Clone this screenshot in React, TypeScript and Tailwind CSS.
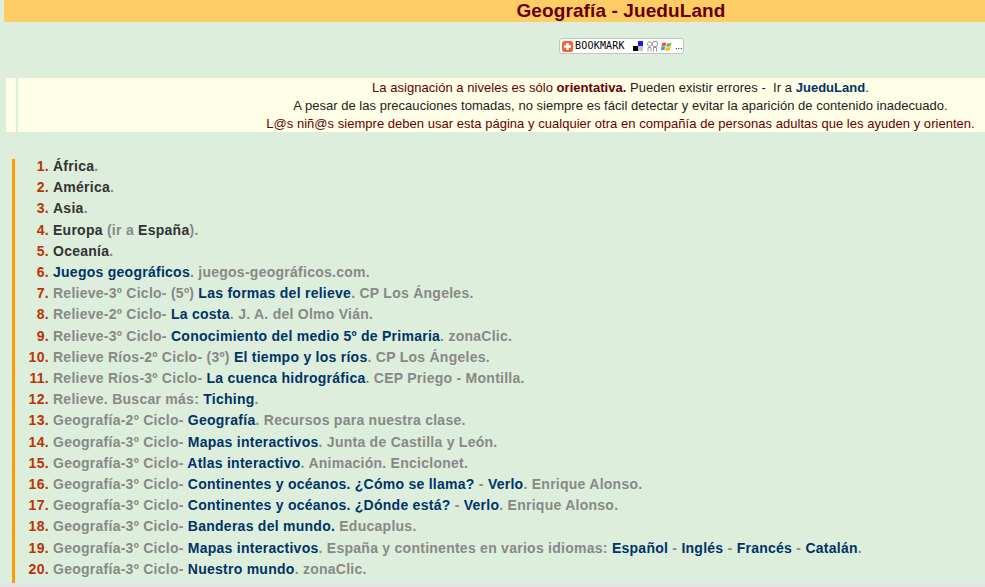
import React from 'react';

const GRAY = 'text-[#888888]';
const LINK = 'text-[#003366]';

const Dim = ({ children }: { children: React.ReactNode }) => <span className={GRAY}>{children}</span>;
const Link = ({ children }: { children: React.ReactNode }) => <span className={LINK}>{children}</span>;
const Dark = ({ children }: { children: React.ReactNode }) => <span className="text-[#333333]">{children}</span>;

const items: React.ReactNode[] = [
    <><Dark>África</Dark><Dim>.</Dim></>,
    <><Dark>América</Dark><Dim>.</Dim></>,
    <><Dark>Asia</Dark><Dim>.</Dim></>,
    <><Dark>Europa</Dark><Dim> (ir a </Dim><Dark>España</Dark><Dim>).</Dim></>,
    <><Dark>Oceanía</Dark><Dim>.</Dim></>,
    <><Link>Juegos geográficos</Link><Dim>. juegos-geográficos.com.</Dim></>,
    <><Dim>Relieve-3º Ciclo- (5º) </Dim><Link>Las formas del relieve</Link><Dim>. CP Los Ángeles.</Dim></>,
    <><Dim>Relieve-2º Ciclo- </Dim><Link>La costa</Link><Dim>. J. A. del Olmo Vián.</Dim></>,
    <><Dim>Relieve-3º Ciclo- </Dim><Link>Conocimiento del medio 5º de Primaria</Link><Dim>. zonaClic.</Dim></>,
    <><Dim>Relieve Ríos-2º Ciclo- (3º) </Dim><Link>El tiempo y los ríos</Link><Dim>. CP Los Ángeles.</Dim></>,
    <><Dim>Relieve Ríos-3º Ciclo- </Dim><Link>La cuenca hidrográfica</Link><Dim>. CEP Priego - Montilla.</Dim></>,
    <><Dim>Relieve. Buscar más: </Dim><Link>Tiching</Link><Dim>.</Dim></>,
    <><Dim>Geografía-2º Ciclo- </Dim><Link>Geografía</Link><Dim>. Recursos para nuestra clase.</Dim></>,
    <><Dim>Geografía-3º Ciclo- </Dim><Link>Mapas interactivos</Link><Dim>. Junta de Castilla y León.</Dim></>,
    <><Dim>Geografía-3º Ciclo- </Dim><Link>Atlas interactivo</Link><Dim>. Animación. Enciclonet.</Dim></>,
    <><Dim>Geografía-3º Ciclo- </Dim><Link>Continentes y océanos. ¿Cómo se llama?</Link><Dim> - </Dim><Link>Verlo</Link><Dim>. Enrique Alonso.</Dim></>,
    <><Dim>Geografía-3º Ciclo- </Dim><Link>Continentes y océanos. ¿Dónde está?</Link><Dim> - </Dim><Link>Verlo</Link><Dim>. Enrique Alonso.</Dim></>,
    <><Dim>Geografía-3º Ciclo- </Dim><Link>Banderas del mundo.</Link><Dim> Educaplus.</Dim></>,
    <><Dim>Geografía-3º Ciclo- </Dim><Link>Mapas interactivos</Link><Dim>. España y continentes en varios idiomas: </Dim><Link>Español</Link><Dim> - </Dim><Link>Inglés</Link><Dim> - </Dim><Link>Francés</Link><Dim> - </Dim><Link>Catalán</Link><Dim>.</Dim></>,
    <><Dim>Geografía-3º Ciclo- </Dim><Link>Nuestro mundo</Link><Dim>. zonaClic.</Dim></>,
];

const BookmarkBadge = () => (
    <div className="flex items-center h-[16px] w-[125px] border border-[#c4c4c4] rounded-[3px] bg-white pl-[2px]">
        <svg width="11" height="11" viewBox="0 0 11 11" className="shrink-0">
            <rect width="11" height="11" rx="2.5" fill="#f4623a" />
            <path d="M5.5 2v7M2 5.5h7" stroke="#fff" strokeWidth="2.4" />
        </svg>
        <span className="ml-[2px] w-[52px] shrink-0 text-[10px] leading-none tracking-[0.2px] text-black font-['DejaVu_Sans_Mono',monospace]">BOOKMARK</span>
        <svg width="10" height="10" viewBox="0 0 10 10" className="ml-[6px] shrink-0">
            <rect x="5" y="0" width="5" height="5" fill="#1a1aff" />
            <rect x="0" y="5" width="5" height="5" fill="#000" />
            <rect x="5" y="5" width="5" height="5" fill="#c4c4c4" />
        </svg>
        <svg width="11" height="11" viewBox="0 0 11 11" fill="none" stroke="#999" className="ml-[4px] shrink-0">
            <rect x="0.5" y="1" width="4" height="4" rx="1.5" />
            <path d="M1 10.5V6.5h3v4" />
            <rect x="5.5" y="0.5" width="5" height="5" rx="1.5" />
            <path d="M6.5 10.5V6.5h3v4" />
        </svg>
        <svg width="11" height="11" viewBox="0 0 11 11" className="ml-[3px] shrink-0">
            <path d="M1 2.5Q3 1 5.2 2L4.4 5.2Q2.2 4.4 0.3 5.6Z" fill="#f05a28" />
            <path d="M6 2.2Q8.2 3 10.6 1.2L9.8 4.8Q7.6 6.2 5.2 5.4Z" fill="#7cb342" />
            <path d="M0.2 6.2Q2 5 4.2 5.8L3.4 9.2Q1.6 8.4 0 9.4Z" fill="#2d9fe0" />
            <path d="M5 6Q7.4 7 9.7 5.4L9 9Q6.6 10.4 4.2 9.4Z" fill="#fbbc05" />
        </svg>
        <span className="ml-[3px] text-[9px] leading-none text-black self-end mb-[2px]">...</span>
    </div>
);

export default function App() {
    return (
        <div className="h-[587px] overflow-hidden bg-[#ddeedd] font-['Liberation_Sans',Arial,sans-serif] flex flex-col">
            <div className="ml-[4px] h-[22px] shrink-0 bg-[#ffcc66] pl-[253px] text-center text-[19px] leading-[21px] font-bold tracking-[0.1px] text-[#660000]">
                Geografía - JueduLand
            </div>

            <div className="h-[16px] mt-[16px] ml-[559px]">
                <BookmarkBadge />
            </div>

            <div className="mt-[24px] ml-[6px] flex h-[54px] shrink-0">
                <div className="w-[10px] bg-[#ffffe8]" />
                <div className="ml-[2px] flex-1 bg-[#ffffe8] pl-[238px] text-center text-[13px] leading-[18px] pt-[1px] tracking-[0.03px]">
                    <div className="text-[#660000]">
                        La asignación a niveles es sólo <b>orientativa.</b> <span className="text-[#222222]">Pueden existir errores -&nbsp; Ir a </span><b className="text-[#003366]">JueduLand</b><span className="text-[#222222]">.</span>
                    </div>
                    <div className="text-[#222222]">
                        A pesar de las precauciones tomadas, no siempre es fácil detectar y evitar la aparición de contenido inadecuado.
                    </div>
                    <div className="text-[#660000]">
                        L@s niñ@s siempre deben usar esta página y cualquier otra en compañía de personas adultas que les ayuden y orienten.
                    </div>
                </div>
            </div>

            <div className="mt-[27px] ml-[12px] h-[424px] shrink-0 border-l-[3px] border-[#ff9900]">
                <ol className="-mt-[3px] list-decimal pl-[38px] text-[14px] font-bold leading-[21.2px] tracking-[0.26px] marker:text-[#bb3300]">
                    {items.map((item, i) => (
                        <li key={i}>{item}</li>
                    ))}
                </ol>
            </div>

            <div className="mt-auto h-[4px] bg-[#e4e4e4]" />
        </div>
    );
}
